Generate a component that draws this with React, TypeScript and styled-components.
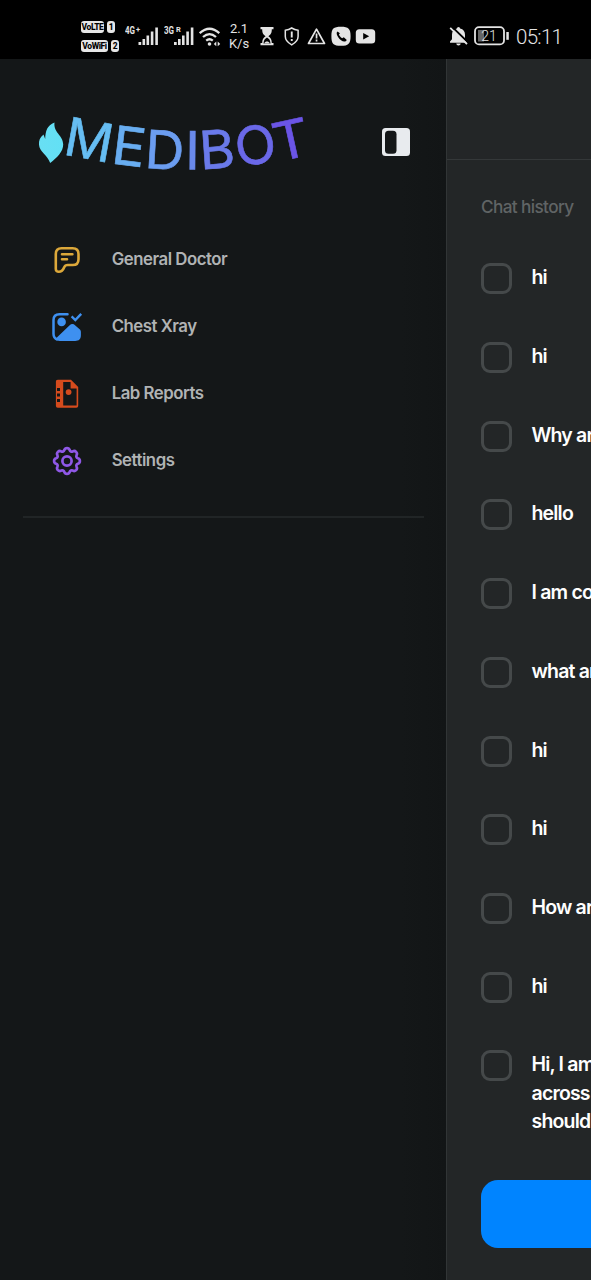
import React from "react";
import styled, { createGlobalStyle } from "styled-components";

const Global = createGlobalStyle`
  * { box-sizing: border-box; }
  html, body { margin: 0; background: #141718; overflow: hidden; }
  body { font-family: Inter, "Liberation Sans", sans-serif; }
`;

const Screen = styled.div`
  width: 591px;
  height: 1280px;
  overflow: hidden;
  display: flex;
  flex-direction: column;
  background: #141718;
`;

const StatusBar = styled.header`
  height: 59px;
  flex: none;
  background: #000;
  color: #e4e4e4;
  display: flex;
  justify-content: space-between;
  padding: 14px 29px 0 81px;
  font-family: Roboto, sans-serif;
`;

const StatusGroup = styled.div`
  display: flex;
  height: 44px;
  align-items: center;
`;

const SimStack = styled.div`
  display: flex;
  flex-direction: column;
  gap: 7px;
  width: 44px;
  margin-top: 1px;
`;

const SimRow = styled.div`
  display: flex;
  gap: 3px;
`;

const Chip = styled.span<{ $w: number }>`
  width: ${(p) => p.$w}px;
  height: 12px;
  border-radius: 3px;
  background: #e6e6e6;
  color: #000;
  font: 800 8.5px/12px Roboto, sans-serif;
  display: flex;
  justify-content: center;
  letter-spacing: -0.4px;
`;

const WifiSlot = styled.span`
  display: flex;
  margin-left: -4px;
`;

const BatterySlot = styled.span`
  display: flex;
  margin-left: 6px;
`;

const Speed = styled.div`
  width: 24px;
  margin-left: 6px;
  margin-right: 7px;
  font-size: 13px;
  line-height: 15px;
  text-align: center;
  white-space: nowrap;
`;

const Clock = styled.span`
  font-size: 20.5px;
  font-weight: 300;
  letter-spacing: -0.7px;
  margin-left: 6px;
  margin-top: 2px;
  width: 46px;
  white-space: nowrap;
`;

const Body = styled.div`
  flex: 1;
  display: flex;
  min-height: 0;
`;

const Sidebar = styled.aside`
  width: 446px;
  flex: none;
  padding: 50px 22px 0 23px;
  background: linear-gradient(90deg, #141718 90%, #121516 100%);
`;

const Brand = styled.div`
  display: flex;
  justify-content: space-between;
  padding: 0 14px 0 12px;
  height: 117px;
`;

const LogoMark = styled.svg`
  overflow: visible;
`;

const ToggleButton = styled.button`
  border: 0;
  padding: 0;
  margin-top: 19px;
  width: 28px;
  height: 28px;
  background: none;
`;

const Nav = styled.nav`
  display: flex;
  flex-direction: column;
  padding-left: 29px;
  height: 292px;
  border-bottom: 2px solid #212526;
`;

const NavItem = styled.a`
  height: 67px;
  display: flex;
  align-items: center;
  gap: 28.7px;
  color: #b0b3b4;
  font-size: 16.8px;
  font-weight: 600;
  letter-spacing: -0.48px;
  svg { width: 31px; height: 31px; flex: none; }
`;

const Label = styled.span`
  margin-top: -1px;
`;

const Panel = styled.main`
  width: 591px;
  flex: none;
  background: #232627;
  border-left: 1px solid #313536;
`;

const PanelHeader = styled.div`
  height: 101px;
  border-bottom: 1px solid #343839;
`;

const Title = styled.h2`
  margin: 0;
  padding: 35px 0 0 34px;
  height: 103.4px;
  font-size: 17.2px;
  line-height: 24px;
  font-weight: 500;
  letter-spacing: -0.62px;
  color: #606465;
`;

const List = styled.div`
  padding-left: 34px;
  height: 917px;
`;

const Row = styled.label`
  display: flex;
  align-items: flex-start;
  gap: 19.5px;
  height: 78.7px;
`;

const Box = styled.span`
  flex: none;
  width: 31px;
  height: 31px;
  border: 3px solid #45494a;
  border-radius: 9px;
`;

const Message = styled.p`
  margin: 0;
  font-size: 19.5px;
  line-height: 28.6px;
  font-weight: 600;
  letter-spacing: -0.82px;
  color: #fefefe;
  white-space: pre;
`;

const Action = styled.button`
  margin: 0 0 0 34px;
  display: block;
  width: 500px;
  height: 67.5px;
  border: 0;
  border-radius: 17px;
  background: #0084ff;
`;

const letters = [
  { c: "M", x: 62.3, y: 154.3, r: 10.4, s: 1.0 },
  { c: "E", x: 110.3, y: 163.3, r: 7, s: 1.05 },
  { c: "D", x: 144, y: 168, r: 3.5, s: 1.03 },
  { c: "I", x: 185, y: 169.6, r: 0.4, s: 1.04 },
  { c: "B", x: 200.5, y: 169.5, r: -4, s: 1.03 },
  { c: "O", x: 237.5, y: 166.8, r: -8, s: 1.02 },
  { c: "T", x: 277.2, y: 161.9, r: -12.5, s: 1.07 },
];

function Logo() {
  return (
    <LogoMark width="270" height="70" viewBox="35 109 270 70" aria-label="MEDIBOT">
      <defs>
        <linearGradient id="flame" x1="38" x2="64" y1="0" y2="0" gradientUnits="userSpaceOnUse">
          <stop stopColor="#69dff3" />
          <stop offset="1" stopColor="#62e0f5" />
        </linearGradient>
      </defs>
      <path
        d="M54.5 122.5C47 125.4 45.5 131 45.2 139L43.5 134.5C40 137.2 38.7 140.4 39 144.7C39.4 152.2 47.5 154.5 50.2 163C57 157.5 63.2 152 63.2 144.3C63.1 135.2 53.2 132.8 54.5 122.5Z"
        fill="url(#flame)"
      />
      {letters.map((l, i) => {
        const color = ["#66bdf2", "#68adf0", "#6b9df0", "#6989ea", "#6a7aea", "#6a68e8", "#6b55e6"][i];
        return (
          <text
            key={l.c}
            transform={`translate(${l.x} ${l.y}) rotate(${l.r}) scale(${l.s} 1)`}
            fontFamily="Inter, sans-serif"
            fontSize="53"
            fontWeight="400"
            fill={color}
            stroke={color}
            strokeWidth="0.6"
          >
            {l.c}
          </text>
        );
      })}
    </LogoMark>
  );
}

const Signal = ({ label, sup, supX, bars }: { label: string; sup: string; supX: number; bars: number }) => (
  <svg width="39" height="30" viewBox="0 0 39 30" fill="#e4e4e4">
    <text x="0" y="13.2" fontSize="10" fontWeight="700" textLength="10" lengthAdjust="spacingAndGlyphs">{label}</text>
    <text x={supX} y="11" fontSize="7.5" fontWeight="700">{sup}</text>
    <path
      transform={`translate(${bars} -1)`}
      d="M0 22h2.7v3h-2.7zM4 19h2.6v6h-2.6zM8 15.5h2.6V25h-2.6zM12.3 11.5h2.6V25h-2.6zM16.8 7.5h2.6V25h-2.6z"
    />
  </svg>
);

const StatusIcons = () => (
  <svg width="118" height="30" viewBox="258 21 118 30" fill="#e4e4e4">
    <path d="M260.5 27h13v2.2h-1.7c0 4-1 5.2-3.4 7 2.4 1.8 3.4 3.2 3.4 6.8h1.7v2.2h-13V43h1.7c0-3.6 1-5 3.4-6.8-2.4-1.8-3.4-3-3.4-7h-1.7z" />
    <path d="M263.5 43.4c.2-3.4 1.6-4.5 3.5-5.8 1.9 1.3 3.3 2.4 3.5 5.8z" fill="#000" />
    <path d="M264.4 43.4c.3-2.6 4.9-2.6 5.2 0z" />
    <path d="M291.7 28c2 1.3 3.8 2 6.4 2.3v6.2c0 3.7-2.4 6.1-6.4 8.3-4-2.2-6.4-4.6-6.4-8.3v-6.2c2.6-.3 4.4-1 6.4-2.3z" fill="none" stroke="#e4e4e4" strokeWidth="1.5" />
    <path d="M290.8 31.5h1.9v6h-1.9zM290.8 39h1.9v2h-1.9zM315.7 33.6h1.7v5h-1.7zM315.7 39.6h1.7v1.8h-1.7z" />
    <path d="m316.5 29.2 8 14.3h-16z" fill="none" stroke="#e4e4e4" strokeWidth="1.7" strokeLinejoin="round" />
    <path d="M341 26.8c7.5 0 9.6 2 9.6 9.4s-2.1 9.6-9.6 9.6-9.6-2-9.6-9.6 2.1-9.4 9.6-9.4z" />
    <path d="M337.5 31.5c-3.5 2.5 4.7 12.5 8.5 9.4l.8-1-3-2.6-1.6.9c-1.7-1-2.7-2.2-3.3-3.7l1-1.2z" fill="#000" />
    <rect x="355.8" y="29.3" width="19.4" height="14.2" rx="3.5" />
    <path d="m363.2 33 6 3.3-6 3.3z" fill="#000" />
  </svg>
);

const Wifi = () => (
  <svg width="22" height="30" viewBox="0 1 22 30" fill="none" stroke="#e4e4e4" strokeWidth="2.3">
    <path d="M.7 13.2Q10.5 4.4 20.3 13.2M4 17Q10.5 11.2 17 17M7.2 20.6q3.3-2.7 6.6 0" />
    <circle cx="10.5" cy="24" r="1.8" fill="#e4e4e4" stroke="none" />
    <path d="m17.3 21.5-2.5 2.4 2.5 2.4zM18.7 21.5l2.5 2.4-2.5 2.4z" fill="#e4e4e4" stroke="none" />
  </svg>
);

const BellOff = () => (
  <svg width="19" height="22" viewBox="0 0 19 22">
    <path d="M9.5 2a1.6 1.6 0 0 1 1.6 1.6c3.3.7 4.9 3 4.9 6.2v4.4l2 2.2v1.3H1v-1.3l2-2.2V9.8c0-3.2 1.6-5.5 4.9-6.2A1.6 1.6 0 0 1 9.5 2zM7.3 18.6h4.4c0 2.6-4.4 2.6-4.4 0z" fill="#e4e4e4" />
    <path d="m2.6 1.4 17 16.6" stroke="#000" strokeWidth="2" />
    <path d="m1.2 2.8 16.8 16.4" stroke="#e4e4e4" strokeWidth="1.8" />
  </svg>
);

const Battery = () => (
  <svg width="36" height="20" viewBox="0 0 36 20">
    <rect x="1" y="1.2" width="29" height="17.2" rx="4" fill="none" stroke="#e4e4e4" strokeWidth="1.8" />
    <path d="M4 4h6v11.5H4z" fill="#666" />
    <path d="M32.3 6h2.5v7.8h-2.5z" fill="#e4e4e4" />
    <text x="15" y="14.8" textAnchor="middle" fontSize="14" fill="#e4e4e4" fontWeight="300">21</text>
  </svg>
);

const ChatIcon = () => (
  <svg viewBox="0 0 31 31" fill="none" stroke="#dca83a" strokeWidth="2.6" strokeLinecap="round" strokeLinejoin="round">
    <path d="M9.5 4.3h11.2c3.8 0 5.8 2.2 5.8 5.8v5.1c0 3.8-2.2 5.8-5.8 5.8h-5c-1.8 0-2.8.5-3.5 2.2-1 2.7-2.2 4.5-5.4 4.5-1.9 0-3-.9-3-2.8V10c0-3.8 1.9-5.7 5.7-5.7z" />
    <path d="M10 10.2h10.4M10 15.2h5" />
  </svg>
);

const XrayIcon = () => (
  <svg viewBox="0 -0.6 31 31" fill="none" stroke="#3e90f0" strokeLinecap="round">
    <path d="M15.5 2.6H7.5C3.8 2.6 1.5 4.6 1.5 8.4v13.8c0 3.2 1.3 4.7 3.5 5.4" strokeWidth="2.5" />
    <circle cx="9.6" cy="10.3" r="4.3" fill="#3e90f0" stroke="none" />
    <path d="M2.8 27.9 17.4 13.9c2-1.8 3.8-2 5.9-.1l4.3 3.8c.9.8 1.3 1.5 1.3 2.7v3.3c0 3.9-2 5.7-5.7 5.7H7.8c-2 0-3.7-.4-5-1.4z" fill="#3e90f0" stroke="none" />
    <path d="m19.6 4.8 3.7 3.6 5.9-6.2" strokeWidth="2.4" strokeLinecap="butt" />
  </svg>
);

const ReportIcon = () => (
  <svg viewBox="0 0 31 31" fill="#d54b1d">
    <path fillRule="evenodd" d="M5.8 1.8H19l7.2 7.2v18.8c0 1.2-.7 1.9-1.9 1.9H5.8c-1.2 0-1.9-.7-1.9-1.9V3.7c0-1.2.7-1.9 1.9-1.9zM11.2 4v23.6h13.4v-17H18.6V4zM5 10v3h3v-3zM5 15.5v3h3v-3zM5 21v3h3v-3z" />
    <circle cx="16.6" cy="14.1" r="2.9" />
  </svg>
);

const gearPoints = Array.from({ length: 8 }, (_, i) => {
  const at = (r: number, deg: number) => {
    const a = (deg * Math.PI) / 180;
    return `${(15 + r * Math.sin(a)).toFixed(2)} ${(16 - r * Math.cos(a)).toFixed(2)}`;
  };
  const a = i * 45;
  return `${i ? "L" : "M"}${at(11.2, a - 14)}C${at(13.7, a - 8)} ${at(13.7, a + 8)} ${at(11.2, a + 14)}Q${at(9.4, a + 22.5)} ${at(11.2, a + 31)}`;
}).join("");

const GearIcon = () => (
  <svg viewBox="0 0 31 31" fill="none" stroke="#8f58e6" strokeWidth="2.7" strokeLinejoin="round">
    <path d={`${gearPoints}Z`} />
    <circle cx="15" cy="16" r="4.6" />
  </svg>
);

const nav = [
  { label: "General Doctor", Icon: ChatIcon },
  { label: "Chest Xray", Icon: XrayIcon },
  { label: "Lab Reports", Icon: ReportIcon },
  { label: "Settings", Icon: GearIcon },
];

const history = ["hi", "hi", "Why are", "hello", "I am coughing", "what are", "hi", "hi", "How are", "hi", "Hi, I am\nacross \nshould"];

export default function App() {
  return (
    <Screen>
      <Global />
      <StatusBar>
        <StatusGroup>
          <SimStack>
            <SimRow><Chip $w={23}>VoLTE</Chip><Chip $w={8}>1</Chip></SimRow>
            <SimRow><Chip $w={27}>VoWiFi</Chip><Chip $w={8}>2</Chip></SimRow>
          </SimStack>
          <Signal label="4G" sup="+" supX={11} bars={13.5} />
          <Signal label="3G" sup="R" supX={12} bars={10} />
          <WifiSlot><Wifi /></WifiSlot>
          <Speed>2.1<br />K/s</Speed>
          <StatusIcons />
        </StatusGroup>
        <StatusGroup>
          <BellOff />
          <BatterySlot><Battery /></BatterySlot>
          <Clock>05:11</Clock>
        </StatusGroup>
      </StatusBar>
      <Body>
        <Sidebar>
          <Brand>
            <Logo />
            <ToggleButton aria-label="Toggle sidebar">
              <svg width="28" height="28" viewBox="0 0 28 28">
                <rect width="28" height="28" rx="3.5" fill="#e8ebee" />
                <rect x="3" y="2.8" width="11.5" height="23" rx="3.5" fill="#141718" />
              </svg>
            </ToggleButton>
          </Brand>
          <Nav>
            {nav.map(({ label, Icon }) => (
              <NavItem key={label}><Icon /><Label>{label}</Label></NavItem>
            ))}
          </Nav>
        </Sidebar>
        <Panel>
          <PanelHeader />
          <Title>Chat history</Title>
          <List>
            {history.map((text, i) => (
              <Row key={i}><Box /><Message>{text}</Message></Row>
            ))}
          </List>
          <Action aria-label="Start new chat" />
        </Panel>
      </Body>
    </Screen>
  );
}
